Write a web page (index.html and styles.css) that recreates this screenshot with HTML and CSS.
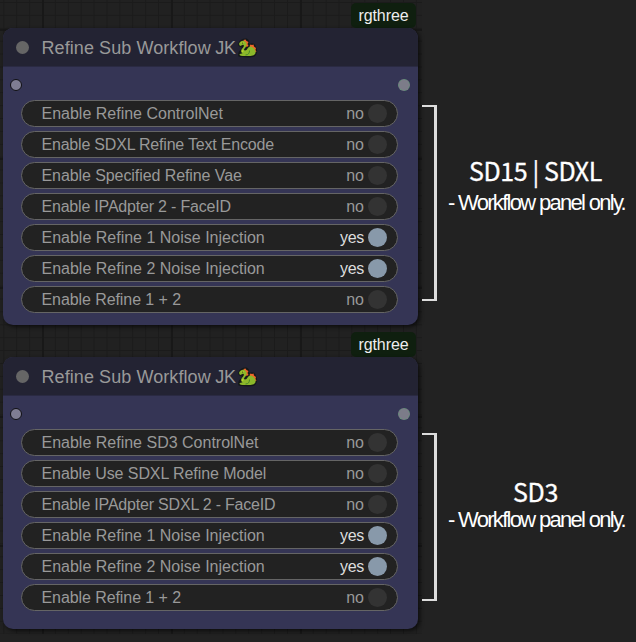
FILE: index.html
```
<!DOCTYPE html>
<html lang="en">
<head>
<meta charset="utf-8">
<title>Refine Sub Workflow</title>
<link rel="stylesheet" href="styles.css">
</head>
<body>
<svg class="defs" width="0" height="0" aria-hidden="true">
  <symbol id="dragon" viewBox="0 0 20 20">
    <path d="M1 5C2 2 5 .5 8 .5C11 .5 12 3 12 6C15 4 18 6 18.5 9C20 11 20.5 16 17 18.5C12 20 5 19.500 1 18.500C0 16 1 13 4 11C5 10 4 9 3 9C1 8 0 7 1 5Z" fill="#14181a"/>
    <path d="M6 2L8 1.500L9 3L11 4L10 6L11 8L9 9L7 5Z" fill="#ef6428"/>
    <path d="M12 8L13 6.500L14.500 7L16 6.500L16.500 8.500L18.500 10L18 12L19 14L15 13Z" fill="#f0642a"/>
    <path d="M1.500 6C2 4 4.500 2 7 3C10 4.500 9.500 8 7.500 10C6 11.500 6.500 12.500 7.500 12.500C10 12.500 10 8.500 13 8.500C16 9 18.500 12 18 15C17 18.500 12 18 7 18C4 18 2 17.500 2 16.500C2 15.500 4 15.500 5 15.500C2 13 4.500 11 6 9C7 7.500 6 6.500 5 7L2.500 8Z" fill="#8cb82a"/>
    <path d="M8 17C11 17 12 15 12 12.500" fill="none" stroke="#47862a" stroke-width="1"/>
    <path d="M4 5L6 4.500M5.500 12L5 14" stroke="#c4d52f" stroke-width="1.200"/>
    <circle cx="5" cy="5" r=".6" fill="#26351b"/>
  </symbol>
</svg>
<main class="page">
  <section class="canvas">
    <div class="group">
      <div class="badge">rgthree</div>
      <article class="node">
        <header class="title"><i class="dot"></i><span>Refine Sub Workflow<b class="jk"> JK</b></span><svg class="dragon"><use href="#dragon"/></svg></header>
        <div class="ports"><i class="port in"></i><i class="port out"></i></div>
        <div class="rows">
          <div class="row"><span>Enable Refine ControlNet</span><em>no</em><i></i></div>
          <div class="row"><span class="tight">Enable SDXL Refine Text Encode</span><em>no</em><i></i></div>
          <div class="row"><span class="snug">Enable Specified Refine Vae</span><em>no</em><i></i></div>
          <div class="row"><span class="tight">Enable IPAdpter 2 - FaceID</span><em>no</em><i></i></div>
          <div class="row on"><span>Enable Refine 1 Noise Injection</span><em>yes</em><i></i></div>
          <div class="row on"><span>Enable Refine 2 Noise Injection</span><em>yes</em><i></i></div>
          <div class="row"><span class="snug">Enable Refine 1 + 2</span><em>no</em><i></i></div>
        </div>
      </article>
    </div>
    <div class="group second">
      <div class="badge">rgthree</div>
      <article class="node">
        <header class="title"><i class="dot"></i><span>Refine Sub Workflow<b class="jk"> JK</b></span><svg class="dragon"><use href="#dragon"/></svg></header>
        <div class="ports"><i class="port in"></i><i class="port out"></i></div>
        <div class="rows">
          <div class="row"><span>Enable Refine SD3 ControlNet</span><em>no</em><i></i></div>
          <div class="row"><span class="snug">Enable Use SDXL Refine Model</span><em>no</em><i></i></div>
          <div class="row"><span class="tight">Enable IPAdpter SDXL 2 - FaceID</span><em>no</em><i></i></div>
          <div class="row on"><span>Enable Refine 1 Noise Injection</span><em>yes</em><i></i></div>
          <div class="row on"><span>Enable Refine 2 Noise Injection</span><em>yes</em><i></i></div>
          <div class="row"><span class="snug">Enable Refine 1 + 2</span><em>no</em><i></i></div>
        </div>
      </article>
    </div>
  </section>
  <aside class="notes">
    <div class="note first"><div class="bracket"></div><div class="copy"><h2>SD15 | SDXL</h2><p>- Workflow panel only.</p></div></div>
    <div class="note last"><div class="bracket"></div><div class="copy"><h2>SD3</h2><p>- Workflow panel only.</p></div></div>
  </aside>
</main>
</body>
</html>
```
FILE: styles.css
```
* { box-sizing: border-box; }
body { margin: 0; background: #222; font-family: "Liberation Sans", Arial, sans-serif; }
.defs { display: block; }
.page { display: grid; grid-template-columns: 422px 214px; height: 642px; overflow: hidden; }
.canvas {
  height: 634px;
  padding: 3px 4px 0 3px;
  background-color: #212121;
  background-image:
    linear-gradient(90deg, #181818 2px, transparent 2px),
    linear-gradient(#181818 2px, transparent 2px),
    linear-gradient(90deg, #1b1b1b 1px, transparent 1px),
    linear-gradient(#1b1b1b 1px, transparent 1px);
  background-size: 129px 129px, 129px 129px, 12.9px 12.9px, 12.9px 12.9px;
  background-position: 42px 29px, 42px 29px, 42px 2px, 42px 2px;
}
.group { display: flex; flex-direction: column; align-items: flex-end; height: 322px; }
.second { margin-top: 7px; height: 297px; }
.badge {
  width: 65px; height: 25px; margin-right: 2px; border-radius: 5px; background: #0f1f0f;
  color: #eee; font-size: 16px; line-height: 25px; text-align: center; letter-spacing: -.1px;
}
.node { width: 415px; flex: 1; border-radius: 10px; background: #353555; box-shadow: 2px 2px 4px rgba(0,0,0,.6); }
.title {
  display: flex; align-items: center; height: 39px; padding: 1px 0 0 12.5px;
  border-radius: 10px 10px 0 0; background: #232333; border-bottom: 1px solid #2a2a42;
  color: #999; font-size: 18px; white-space: pre;
}
.title span { width: 195px; padding-top: 1px; letter-spacing: .08px; }
.jk { font-weight: 400; letter-spacing: -.4px; }
.dot { width: 13px; height: 13px; margin-right: 13px; border-radius: 50%; background: #666; }
.dragon { width: 21px; height: 20px; }
.ports { display: flex; justify-content: space-between; height: 33px; padding: 12px 8px 0 7px; }
.port { width: 12px; height: 12px; border-radius: 50%; }
.in { border: 1.5px solid #101014; background: #7f7d93; }
.out { background: #7c7c89; border: 1px dashed #66917a; }
.rows { display: grid; grid-auto-rows: 27px; gap: 4px; padding: 0 20px 0 18px; }
.row {
  display: flex; align-items: center; height: 27px; padding: 0 10px 0 19.5px;
  border: 1.5px solid #656565; border-radius: 14px; background: #222;
  color: #999; font-size: 16px; white-space: nowrap;
}
.row span { flex: 1; }
.row .snug { letter-spacing: -.08px; }
.row .tight { letter-spacing: -.2px; }
.row em { margin-right: 4px; font-style: normal; }
.row i { width: 19px; height: 19px; border-radius: 50%; background: #333; }
.on em { color: #ddd; letter-spacing: -.3px; }
.on i { background: #89a; }
.notes { display: flex; flex-direction: column; color: #fff; }
.note { display: flex; }
.first { margin-top: 105px; height: 196px; }
.last { margin-top: 132px; height: 168px; }
.bracket { width: 15px; border: 2px solid #ddd; border-right-width: 3px; border-left: 0; }
.copy { width: 199px; text-align: center; white-space: nowrap; }
.first .copy { padding-top: 49px; }
.last .copy { padding-top: 42px; }
h2 { margin: 0 2px 0 0; font: 400 25px/32px "Noto Sans CJK SC", "Noto Sans", sans-serif; letter-spacing: -.4px; -webkit-text-stroke: .3px #fff; }
p { margin: 0; font-size: 22px; line-height: 33px; letter-spacing: -1.7px; }
.last p { line-height: 25px; }
```
